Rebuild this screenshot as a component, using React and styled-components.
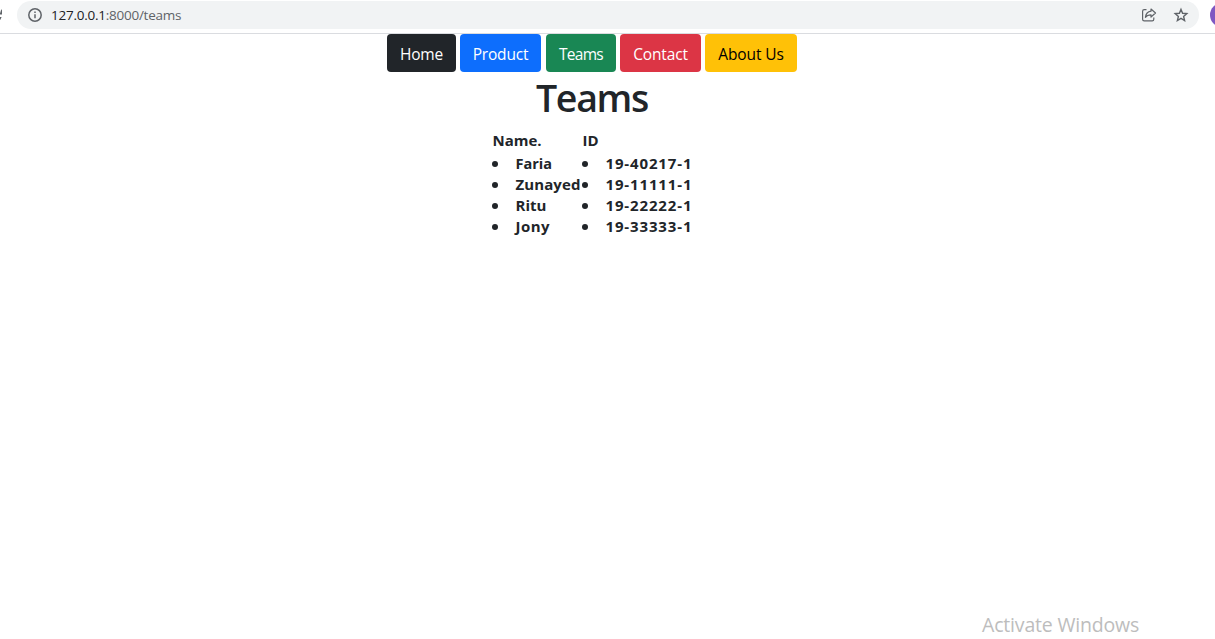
import React from "react";
import styled, { createGlobalStyle } from "styled-components";

const GlobalStyle = createGlobalStyle`
  * { box-sizing: border-box; }
  body {
    margin: 0;
    background: #fff;
    color: #212529;
    font-family: "Open Sans", "Noto Sans", sans-serif;
    overflow: hidden;
  }
`;

const Screen = styled.div`
  height: 639px;
  display: flex;
  flex-direction: column;
  overflow: hidden;
`;

const BrowserBar = styled.header`
  display: flex;
  flex: none;
  height: 34px;
  padding-top: 1px;
  border-bottom: 1px solid #dadce0;
  overflow: hidden;
`;

const ReloadSlot = styled.div`
  width: 17px;
  flex: none;
  svg { display: block; }
`;

const AddressBar = styled.div`
  display: flex;
  align-items: center;
  flex: none;
  width: 1182px;
  height: 28px;
  padding: 0 10px;
  border-radius: 14px;
  background: #f1f3f4;
  color: #5f6368;
`;

const Url = styled.span`
  flex: 1;
  margin-left: 8px;
  font-size: 13.5px;
  line-height: 20px;
  letter-spacing: -0.25px;
  b { font-weight: 400; color: #202124; }
`;

const Actions = styled.div`
  display: flex;
  gap: 16px;
  svg { display: block; }
`;

const Avatar = styled.div`
  flex: none;
  width: 24px;
  height: 24px;
  margin: 2px 0 0 11px;
  border-radius: 50%;
  background: #7e57c2;
`;

const Page = styled.main`
  flex: 1;
  width: 1184px;
  display: flex;
  flex-direction: column;
  align-items: center;
`;

const Nav = styled.nav`
  display: flex;
  gap: 4px;
`;

const NavButton = styled.button`
  width: ${(p) => p.$width}px;
  height: 38px;
  margin: 0 ${(p) => p.$after || 0}px 0 0;
  padding: 1px 0 0;
  border: 0;
  border-radius: 4px;
  background: ${(p) => p.$bg};
  color: ${(p) => p.$color || "#fff"};
  font: 400 15.5px/24px "Open Sans", "Noto Sans", sans-serif;
  letter-spacing: ${(p) => p.$spacing || 0}px;
  white-space: nowrap;
`;

const Title = styled.h1`
  margin: 2px 0 8px;
  font-size: 37.5px;
  font-weight: 600;
  line-height: 48px;
  letter-spacing: -1.3px;
`;

const Table = styled.section`
  display: flex;
  width: 201px;
  font-size: 14.5px;
  font-weight: 700;
`;

const Column = styled.div`
  width: ${(p) => p.$width}px;
  flex: none;
`;

const ColumnHead = styled.div`
  height: 23px;
  padding-left: ${(p) => p.$indent}px;
  font-size: 15px;
  line-height: 21px;
`;

const List = styled.ul`
  margin: 0;
  padding: 0;
  list-style: none;
`;

const Item = styled.li`
  display: flex;
  align-items: center;
  height: 21px;
  font-size: ${(p) => p.$size}px;
  line-height: 21px;
  letter-spacing: ${(p) => p.$spacing}px;
  white-space: nowrap;
  &::before {
    content: "";
    width: 6px;
    height: 6px;
    margin-right: 18px;
    border-radius: 50%;
    background: #212529;
  }
`;

const Watermark = styled.div`
  position: absolute;
  left: 982px;
  top: 611px;
  font-size: 19.5px;
  line-height: 28px;
  letter-spacing: -0.18px;
  color: #bdbdbd;
  white-space: nowrap;
`;

const links = [
  { label: "Home", bg: "#212529", width: 69, spacing: -0.2 },
  { label: "Product", bg: "#0d6efd", width: 81, after: 1, spacing: -0.2 },
  { label: "Teams", bg: "#198754", width: 70, spacing: -0.7 },
  { label: "Contact", bg: "#dc3545", width: 81, spacing: -0.15 },
  { label: "About Us", bg: "#ffc107", width: 92, color: "#000", spacing: -0.1 },
];

const names = [
  { text: "Faria", size: 14.5, spacing: 0 },
  { text: "Zunayed", size: 15, spacing: 0.1 },
  { text: "Ritu", size: 15, spacing: 0 },
  { text: "Jony", size: 15, spacing: 0.5 },
];
const ids = ["19-40217-1", "19-11111-1", "19-22222-1", "19-33333-1"].map((text) => ({
  text,
  size: 15,
  spacing: 0.86,
}));

function Bullets({ items }) {
  return (
    <List>
      {items.map((item) => (
        <Item key={item.text} $size={item.size} $spacing={item.spacing}>{item.text}</Item>
      ))}
    </List>
  );
}

export default function App() {
  return (
    <Screen>
      <GlobalStyle />
      <BrowserBar>
        <ReloadSlot>
          <svg width="4" height="28" viewBox="0 0 4 28">
            <path d="M2 8v5.5H0v-2h.6V10zM0 16h1.6L.5 18.5 0 19z" fill="#5f6368" />
          </svg>
        </ReloadSlot>
        <AddressBar>
          <svg width="16" height="16" viewBox="0 0 16 16">
            <circle cx="8" cy="8" r="6.2" fill="none" stroke="#5f6368" strokeWidth="1.5" />
            <path d="M7.25 7.2h1.5v4.1h-1.5zM7.25 4.6h1.5v1.5h-1.5z" fill="#5f6368" />
          </svg>
          <Url>
            <b>127.0.0.1</b>:8000/teams
          </Url>
          <Actions>
            <svg width="16" height="16" viewBox="0 0 16 16" fill="none" stroke="#5f6368" strokeWidth="1.2" strokeLinejoin="round">
              <path d="M5.5 2.6H3.2Q1.6 2.6 1.6 4.2v8q0 1.6 1.6 1.6h8q1.6 0 1.6-1.6v-1.8" />
              <path d="M10 2l4.5 4-4.5 4V7.8C7.3 7.8 5.6 8.6 4.4 10.3 4.8 7 6.6 4.7 10 4.2z" />
            </svg>
            <svg width="16" height="16" viewBox="0 0 16 16" fill="none" stroke="#5f6368" strokeWidth="1.4">
              <path d="M8 2.4l1.6 3.9 4.2.35-3.2 2.75 1 4.1L8 11.3l-3.6 2.2 1-4.1L2.2 6.65l4.2-.35z" />
            </svg>
          </Actions>
        </AddressBar>
        <Avatar />
      </BrowserBar>
      <Page>
        <Nav>
          {links.map((l) => (
            <NavButton key={l.label} $bg={l.bg} $width={l.width} $color={l.color} $after={l.after} $spacing={l.spacing}>
              {l.label}
            </NavButton>
          ))}
        </Nav>
        <Title>Teams</Title>
        <Table>
          <Column $width={90}>
            <ColumnHead $indent={1}>Name.</ColumnHead>
            <Bullets items={names} />
          </Column>
          <Column $width={111}>
            <ColumnHead $indent={1}>ID</ColumnHead>
            <Bullets items={ids} />
          </Column>
        </Table>
      </Page>
      <Watermark>Activate Windows</Watermark>
    </Screen>
  );
}
